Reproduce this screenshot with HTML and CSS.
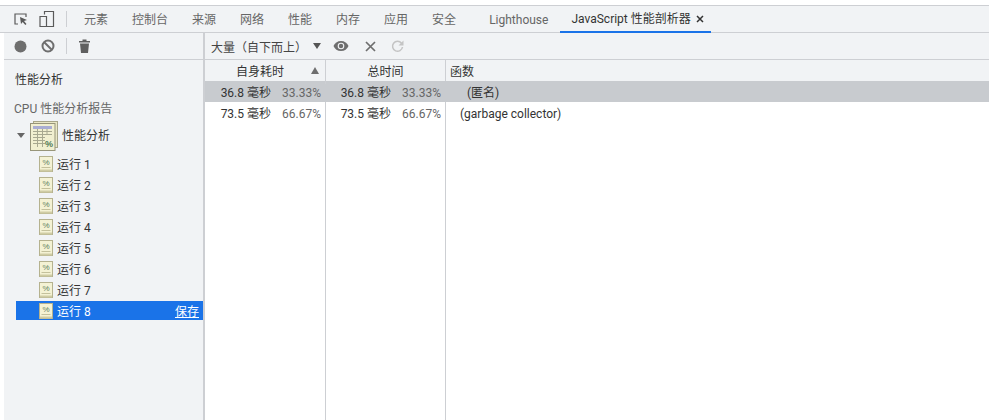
FILE: index.html
```html
<!DOCTYPE html>
<html lang="zh-CN">
<head>
<meta charset="utf-8">
<title>JavaScript 性能剖析器</title>
<link rel="stylesheet" href="styles.css">
</head>
<body>
<svg class="defs" width="0" height="0" aria-hidden="true">
  <defs>
    <symbol id="run" viewBox="0 0 14 16">
      <rect x="0.500" y="0.500" width="13" height="15" fill="#f4f2d4" stroke="#b5b28f"/>
      <rect x="1" y="13.500" width="12" height="2" fill="#cfcca4"/>
      <rect x="2.500" y="11" width="9" height="1" fill="#c4c19c"/>
      <text x="7" y="9" class="pct">%</text>
    </symbol>
  </defs>
</svg>
<div class="app">
  <div class="tabbar">
    <div class="tool-icons">
      <svg class="ic" width="16" height="16" viewBox="0 0 16 16"><path d="M5 13H2V3h11v3" fill="none" stroke="#5a5a5a" stroke-width="1.200"/><path d="M7 6l7 3-3 1 2.500 3-1.200 1-2.600-3L8 13z" fill="#5a5a5a"/></svg>
      <svg class="ic" width="16" height="18" viewBox="0 0 16 18"><path d="M5.500 4.500V1.500h9v15h-9M1 6.500h6.500v10H1z" fill="none" stroke="#5a5a5a" stroke-width="1.200"/></svg>
    </div>
    <span class="vsep"></span>
    <nav class="tabs">
      <span class="tab">元素</span>
      <span class="tab">控制台</span>
      <span class="tab">来源</span>
      <span class="tab">网络</span>
      <span class="tab">性能</span>
      <span class="tab">内存</span>
      <span class="tab">应用</span>
      <span class="tab">安全</span>
      <span class="tab lighthouse">Lighthouse</span>
      <span class="tab active">JavaScript 性能剖析器<svg class="tab-x" width="8" height="8" viewBox="0 0 8 8"><path d="M1 1l6 6M7 1L1 7" stroke="#333" stroke-width="1.500"/></svg></span>
    </nav>
  </div>
  <div class="main">
    <aside class="sidebar">
      <div class="side-tools">
        <svg class="ic" width="13" height="13" viewBox="0 0 13 13"><circle cx="6.500" cy="6.500" r="6" fill="#6e6e6e"/></svg>
        <svg class="ic" width="14" height="14" viewBox="0 0 14 14"><circle cx="7" cy="7" r="5.500" fill="none" stroke="#6e6e6e" stroke-width="2"/><path d="M3 3l8 8" stroke="#6e6e6e" stroke-width="2"/></svg>
        <span class="vsep small"></span>
        <svg class="ic" width="11" height="14" viewBox="0 0 11 14"><path d="M0 2h11v1.500H0zM3.500 0.500h4V2h-4zM1 4.500h9L9 14H2z" fill="#5f5f5f"/></svg>
      </div>
      <div class="side-title">性能分析</div>
      <div class="side-section">CPU 性能分析报告</div>
      <div class="group">
        <span class="caret"></span>
        <svg class="group-icon" width="28" height="30" viewBox="0 0 28 30">
          <rect x="3.500" y="0.500" width="24" height="26" fill="#e9e7c6" stroke="#a8a68a"/>
          <rect x="0.500" y="2.500" width="24.500" height="27" fill="#f1efd0" stroke="#97957a"/>
          <rect x="3" y="5" width="19" height="3" fill="#a9add2"/>
          <path d="M3 10.500h19M3 13.500h19M3 16.500h12M3 19.500h12M3 22.500h12M7.500 8v18M12.500 8v18M17 8v6" stroke="#a8a890" stroke-width="1"/>
          <text x="19" y="26" class="pct-big">%</text>
        </svg>
        <span class="group-label">性能分析</span>
      </div>
      <ul class="runs">
        <li class="run"><svg class="run-icon" width="14" height="16"><use href="#run"/></svg><span>运行 1</span></li>
        <li class="run"><svg class="run-icon" width="14" height="16"><use href="#run"/></svg><span>运行 2</span></li>
        <li class="run"><svg class="run-icon" width="14" height="16"><use href="#run"/></svg><span>运行 3</span></li>
        <li class="run"><svg class="run-icon" width="14" height="16"><use href="#run"/></svg><span>运行 4</span></li>
        <li class="run"><svg class="run-icon" width="14" height="16"><use href="#run"/></svg><span>运行 5</span></li>
        <li class="run"><svg class="run-icon" width="14" height="16"><use href="#run"/></svg><span>运行 6</span></li>
        <li class="run"><svg class="run-icon" width="14" height="16"><use href="#run"/></svg><span>运行 7</span></li>
        <li class="run selected"><svg class="run-icon" width="14" height="16"><use href="#run"/></svg><span>运行 8</span><span class="save">保存</span></li>
      </ul>
    </aside>
    <section class="content">
      <div class="content-tools">
        <span class="select">大量（自下而上）</span>
        <span class="select-caret"></span>
        <svg class="ic eye" width="16" height="12" viewBox="0 0 16 12"><path d="M8 1C4.500 1 1.700 3 .5 6c1.200 3 4 5 7.500 5s6.300-2 7.500-5C14.300 3 11.500 1 8 1z" fill="#6e6e6e"/><circle cx="8" cy="6" r="3.300" fill="#f1f3f5"/><circle cx="8" cy="6" r="2.200" fill="#6e6e6e"/></svg>
        <svg class="ic cross" width="11" height="11" viewBox="0 0 11 11"><path d="M1 1l9 9M10 1l-9 9" stroke="#6e6e6e" stroke-width="1.700"/></svg>
        <svg class="ic reload" width="13" height="13" viewBox="0 0 13 13"><path d="M10.500 3.200A5 5 0 1 0 11.500 7" fill="none" stroke="#c4c4c4" stroke-width="1.500"/><path d="M12.500 0.500v5h-5z" fill="#c4c4c4"/></svg>
      </div>
      <div class="table">
        <div class="thead">
          <div class="th col-self">自身耗时<span class="sort"></span></div>
          <div class="th col-total">总时间</div>
          <div class="th col-fn">函数</div>
        </div>
        <div class="row selected-row">
          <div class="cell col-self"><span class="ms">36.8 毫秒</span><span class="pc">33.33%</span></div>
          <div class="cell col-total"><span class="ms">36.8 毫秒</span><span class="pc">33.33%</span></div>
          <div class="cell col-fn fn-deep">(匿名)</div>
        </div>
        <div class="row">
          <div class="cell col-self"><span class="ms">73.5 毫秒</span><span class="pc">66.67%</span></div>
          <div class="cell col-total"><span class="ms">73.5 毫秒</span><span class="pc">66.67%</span></div>
          <div class="cell col-fn fn-top">(garbage collector)</div>
        </div>
        <div class="filler">
          <div class="col-self"></div>
          <div class="col-total"></div>
          <div class="col-fn"></div>
        </div>
      </div>
    </section>
  </div>
</div>
</body>
</html>
```

FILE: styles.css
```css
* { box-sizing: border-box; }
html, body { margin: 0; height: 100%; background: #fff; overflow: hidden; }
body {
  font-family: Roboto, "Noto Sans CJK SC", sans-serif;
  font-size: 12px;
  color: #333;
  padding-top: 5px;
}
.defs { position: absolute; }
.pct { font-size: 8px; fill: #5e7f5e; text-anchor: middle; font-family: "Liberation Sans", sans-serif; }
.pct-big { font-size: 9px; font-weight: 700; fill: #4f7a57; text-anchor: middle; font-family: "Liberation Sans", sans-serif; }
.app { height: 415px; display: flex; flex-direction: column; }
.ic { display: block; flex: none; }

.tabbar {
  height: 28px;
  flex: none;
  display: flex;
  align-items: center;
  background: #f1f3f5;
  border-top: 1px solid #cdcfd3;
  border-bottom: 1px solid #cdcfd3;
}
.tool-icons { display: flex; align-items: center; gap: 10px; padding-left: 13px; width: 66px; }
.vsep { width: 1px; height: 16px; background: #cdcfd3; flex: none; }
.vsep.small { margin-left: -3px; margin-right: -2px; }
.tabs { display: flex; height: 100%; margin-left: 5px; }
.tab { padding: 0 12px; line-height: 28px; height: 27px; color: #666; white-space: nowrap; }
.tab.lighthouse { margin-left: 9px; }
.tab.active { color: #333; border-bottom: 2px solid #1a73e8; display: flex; align-items: center; padding: 0 7px 0 11px; line-height: 26px; }
.tab-x { margin-left: 5px; }

.main { flex: 1; display: flex; min-height: 0; padding-left: 4px; }
.sidebar {
  width: 201px;
  flex: none;
  background: #f1f3f5;
  border-right: 2px solid #cdcfd3;
}
.side-tools {
  height: 27px;
  display: flex;
  align-items: center;
  gap: 14px;
  padding-left: 10px;
  border-bottom: 1px solid #cdcfd3;
  margin-right: -1px;
}
.side-title { height: 22px; margin-top: 9px; padding-left: 11px; line-height: 22px; color: #333; }
.side-section { height: 22px; margin-top: 7px; padding-left: 10px; line-height: 22px; color: #666; }
.group { height: 33px; margin-top: -2px; display: flex; align-items: center; padding-left: 13px; }
.caret { width: 0; height: 0; border-left: 4px solid transparent; border-right: 4px solid transparent; border-top: 5px solid #666; margin-top: 1px; }
.group-icon { margin-left: 5px; margin-top: 2px; flex: none; }
.group-label { margin-left: 4px; }
.runs { list-style: none; margin: 2px 0 0; padding: 0; }
.run { height: 21px; display: flex; align-items: center; padding-left: 23px; margin-left: 12px; }
.run-icon { margin-right: 4px; flex: none; }
.run.selected { height: 19px; margin-top: 1px; background: #1a73e8; color: #fff; }
.save { margin-left: auto; margin-right: 4px; text-decoration: underline; }

.content { flex: 1; min-width: 0; display: flex; flex-direction: column; }
.content-tools {
  height: 27px;
  flex: none;
  display: flex;
  align-items: center;
  background: #f1f3f5;
  border-bottom: 1px solid #cdcfd3;
  padding-left: 6px;
}
.select { color: #444; width: 102px; white-space: nowrap; }
.select-caret { width: 0; height: 0; border-left: 4px solid transparent; border-right: 4px solid transparent; border-top: 6px solid #555; margin-left: 0; }
.eye { margin-left: 12px; }
.cross { margin-left: 16px; }
.reload { margin-left: 15px; }

.table { flex: 1; display: flex; flex-direction: column; min-height: 0; }
.thead, .row, .filler { display: grid; grid-template-columns: 121px 120px 1fr; }
.thead { height: 21px; flex: none; background: #f1f3f5; }
.th { line-height: 24px; text-align: center; color: #333; }
.col-self, .col-total { border-right: 1px solid #cdcfd3; }
.th.col-self { position: relative; padding-right: 10px; }
.th.col-fn { text-align: left; padding-left: 4px; }
.sort { position: absolute; right: 6px; top: 7px; width: 0; height: 0; border-left: 4px solid transparent; border-right: 4px solid transparent; border-bottom: 7px solid #6e6e6e; }
.row { height: 21px; flex: none; }
.cell { line-height: 24px; display: flex; justify-content: flex-end; padding-right: 4px; white-space: nowrap; }
.ms { color: #333; }
.pc { width: 50px; text-align: right; color: #666; }
.col-fn.cell { justify-content: flex-start; padding: 0; }
.fn-deep { padding-left: 21px !important; }
.fn-top { padding-left: 14px !important; }
.selected-row { background: #c8cbcf; }
.selected-row .col-self, .selected-row .col-total { border-right-color: #c8cbcf; }
.filler { flex: 1; }
```
